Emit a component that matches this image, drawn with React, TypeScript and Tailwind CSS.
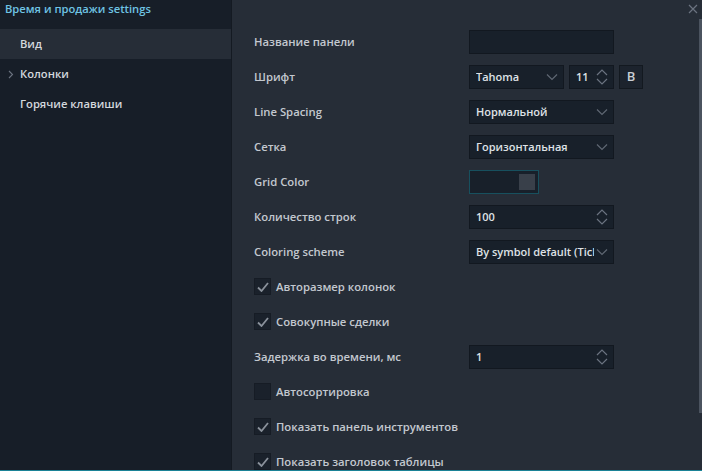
import React from "react";

const font = { fontFamily: '"Open Sans", "Noto Sans", sans-serif' };

function ChevronDown() {
  return (
    <svg width="12" height="8" viewBox="0 0 12 8" className="shrink-0">
      <path d="M1 1.5 L6 6.5 L11 1.5" fill="none" stroke="#5f6773" strokeWidth="1.2" />
    </svg>
  );
}

function Spinner() {
  return (
    <svg width="12" height="20" viewBox="0 0 12 20" className="shrink-0">
      <path d="M1 8 L6 3 L11 8" fill="none" stroke="#6b7380" strokeWidth="1.2" />
      <path d="M1 12 L6 17 L11 12" fill="none" stroke="#6b7380" strokeWidth="1.2" />
    </svg>
  );
}

function Check({ on }: { on: boolean }) {
  return (
    <div className="w-[17px] h-[17px] bg-[#1a212b] border border-[#161c25] flex items-center justify-center shrink-0">
      {on && (
        <svg width="12" height="10" viewBox="0 0 12 10">
          <path d="M1 5.5 L4.5 9 L11 1" fill="none" stroke="#8a919b" strokeWidth="1.8" />
        </svg>
      )}
    </div>
  );
}

function Select({ text, w = "w-[145px]" }: { text: string; w?: string }) {
  return (
    <div className={`${w} h-[24px] bg-[#18202a] border border-[#121820] flex items-center pl-[6px] pr-[5px] gap-[2px]`}>
      <span className="flex-1 min-w-0 pt-[1px] text-[11px] font-semibold text-[#dfe2e6] whitespace-nowrap overflow-hidden">{text}</span>
      <ChevronDown />
    </div>
  );
}

function Num({ text, w = "w-[145px]" }: { text: string; w?: string }) {
  return (
    <div className={`${w} h-[24px] bg-[#18202a] border border-[#121820] flex items-center pl-[6px] pr-[5px]`}>
      <span className="flex-1 pt-[1px] text-[11px] font-semibold text-[#dfe2e6]">{text}</span>
      <Spinner />
    </div>
  );
}

function Row({ label, children }: { label: string; children?: React.ReactNode }) {
  return (
    <div className="h-[35px] flex items-center">
      <div className="w-[215px] pt-[2px] text-[11.3px] font-semibold text-[#c3c8cf] whitespace-nowrap">{label}</div>
      {children}
    </div>
  );
}

function CheckRow({ label, on }: { label: string; on: boolean }) {
  return (
    <div className="h-[35px] flex items-center gap-[5px]">
      <Check on={on} />
      <span className="pt-[2px] text-[11.3px] font-semibold text-[#c3c8cf] whitespace-nowrap">{label}</span>
    </div>
  );
}

export default function App() {
  return (
    <div style={font} className="w-[702px] h-[471px] overflow-hidden flex flex-col bg-[#262d37]">
      <div className="flex flex-1 min-h-0">
        <div className="w-[232px] bg-[#171e28] border-r border-[#141a22] flex flex-col shrink-0">
          <div className="h-[29px] pl-[5px] pt-[1px] text-[11.2px] font-semibold text-[#6fc4e4] whitespace-nowrap">
            Время и продажи settings
          </div>
          <div className="h-[30px] bg-[#262d37] flex items-center pl-[20px] pt-[1px] text-[11.2px] font-semibold text-[#d4d8dd]">Вид</div>
          <div className="h-[30px] flex items-center pt-[1px] text-[11.2px] font-semibold text-[#d4d8dd] relative pl-[20px]">
            <svg width="6" height="9" viewBox="0 0 6 9" className="absolute left-[8px] top-[11px]">
              <path d="M1 1 L4.5 4.5 L1 8" fill="none" stroke="#6b7380" strokeWidth="1.1" />
            </svg>
            Колонки
          </div>
          <div className="h-[30px] flex items-center pl-[20px] pt-[1px] text-[11.2px] font-semibold text-[#d4d8dd]">Горячие клавиши</div>
        </div>
        <div className="flex-1 relative">
          <svg width="10" height="10" viewBox="0 0 10 10" className="absolute right-[4px] top-[4px]">
            <path d="M1 1 L9 9 M9 1 L1 9" stroke="#6b7380" strokeWidth="1.2" />
          </svg>
          <div className="absolute right-0 top-[19px] w-[3px] h-[394px] bg-[#4b535f]" />
          <div className="pt-[24px] pl-[22px] flex flex-col">
            <Row label="Название панели">
              <div className="w-[145px] h-[24px] bg-[#18202a] border border-[#121820]" />
            </Row>
            <Row label="Шрифт">
              <div className="flex items-center gap-[5px]">
                <Select text="Tahoma" w="w-[95px]" />
                <Num text="11" w="w-[45px]" />
                <div className="w-[24px] h-[24px] bg-[#1c232d] border border-[#131920] flex items-center justify-center text-[13px] font-semibold text-[#c9ced5]">
                  B
                </div>
              </div>
            </Row>
            <Row label="Line Spacing">
              <Select text="Нормальной" />
            </Row>
            <Row label="Сетка">
              <Select text="Горизонтальная" />
            </Row>
            <Row label="Grid Color">
              <div className="w-[70px] h-[24px] bg-[#18202a] border border-[#17505e] flex items-center justify-end pr-[3px]">
                <div className="w-[16px] h-[16px] bg-[#39404a]" />
              </div>
            </Row>
            <Row label="Количество строк">
              <Num text="100" />
            </Row>
            <Row label="Coloring scheme">
              <Select text="By symbol default (Ticker)" />
            </Row>
            <CheckRow label="Авторазмер колонок" on />
            <CheckRow label="Совокупные сделки" on />
            <Row label="Задержка во времени, мс">
              <Num text="1" />
            </Row>
            <CheckRow label="Автосортировка" on={false} />
            <CheckRow label="Показать панель инструментов" on />
            <CheckRow label="Показать заголовок таблицы" on />
          </div>
        </div>
      </div>
      <div className="h-[1px] bg-[#1a8296] shrink-0" />
    </div>
  );
}
